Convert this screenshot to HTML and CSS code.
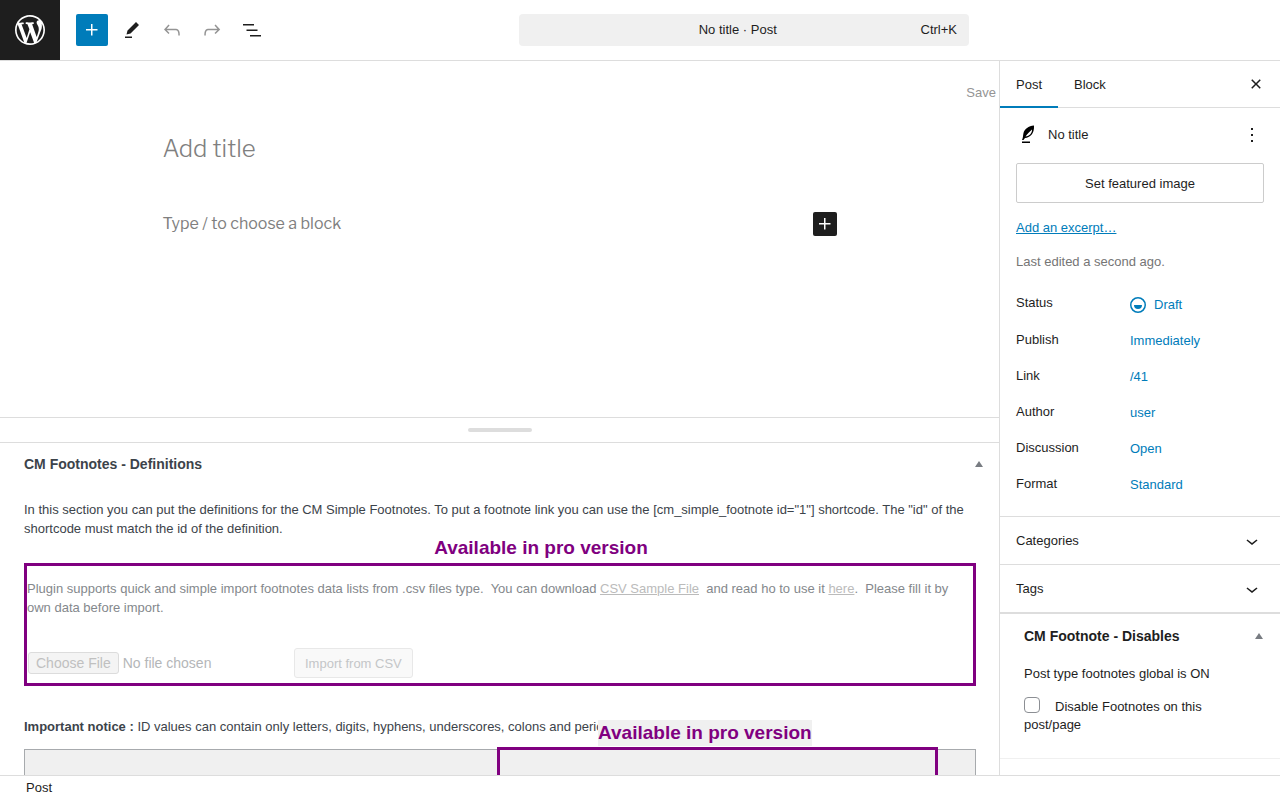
FILE: index.html
```html
<!DOCTYPE html>
<html lang="en">
  <head>
    <meta charset="UTF-8">
    <meta name="viewport" content="width=device-width, initial-scale=1.0">
    <title>Add New Post</title>
    <link rel="stylesheet" href="styles.css">
  </head>
  <body>
    <header class="header">
      <a href="#" class="logo" aria-label="View Posts">
        <svg width="36" height="36" viewBox="-2 -2 24 24"><path d="M20 10c0-5.51-4.49-10-10-10C4.48 0 0 4.49 0 10c0 5.52 4.48 10 10 10 5.51 0 10-4.48 10-10zM7.78 15.37L4.37 6.22c.55-.02 1.17-.08 1.17-.08.5-.06.44-1.13-.06-1.11 0 0-1.45.11-2.37.11-.18 0-.37 0-.58-.01C4.12 2.69 6.87 1.11 10 1.11c2.33 0 4.45.87 6.05 2.34-.68-.11-1.65.39-1.65 1.58 0 .74.45 1.36.9 2.1.35.61.55 1.36.55 2.46 0 1.49-1.4 5-1.4 5l-3.03-8.37c.54-.02.82-.17.82-.17.5-.05.44-1.25-.06-1.22 0 0-1.44.12-2.38.12-.87 0-2.33-.12-2.33-.12-.5-.03-.56 1.2-.06 1.22l.92.08 1.26 3.41zM17.41 10c.24-.64.74-1.87.43-4.25.7 1.29 1.05 2.71 1.05 4.25 0 3.29-1.73 6.24-4.4 7.78.97-2.59 1.94-5.2 2.92-7.78zM6.1 18.09C3.12 16.65 1.11 13.53 1.11 10c0-1.3.23-2.48.72-3.59C3.25 10.3 4.67 14.2 6.1 18.09zm4.03-6.63l2.58 6.98c-.86.29-1.76.45-2.71.45-.79 0-1.57-.11-2.29-.33.81-2.38 1.62-4.74 2.42-7.1z"/></svg>
      </a>
      <div class="tools">
        <button class="tool tool-primary" aria-label="Block Inserter">
          <svg width="24" height="24" viewBox="0 0 24 24"><path d="M11 12.5V17.5H12.5V12.5H17.5V11H12.5V6H11V11H6V12.5H11Z"/></svg>
        </button>
        <button class="tool" aria-label="Tools">
          <svg width="24" height="24" viewBox="0 0 24 24"><path d="m19 7-3-3-8.500 8.500-1 4 4-1L19 7Zm-7 11.500H5V20h7v-1.500Z"/></svg>
        </button>
        <button class="tool" aria-label="Undo" disabled>
          <svg width="24" height="24" viewBox="0 0 24 24"><path d="M18.3 11.7c-.6-.6-1.4-.9-2.3-.9H6.7l2.9-3.3-1.1-1-4.5 5L8.5 16l1-1-2.7-2.7H16c.5 0 .9.2 1.3.5 1 1 1 3.4 1 4.5v.3h1.5v-.2c0-1.5 0-4.3-1.5-5.7z"/></svg>
        </button>
        <button class="tool" aria-label="Redo" disabled>
          <svg width="24" height="24" viewBox="0 0 24 24"><path d="M15.6 6.5l-1.1 1 2.9 3.3H8c-.9 0-1.7.3-2.3.9-1.4 1.5-1.4 4.2-1.4 5.6v.2h1.5v-.3c0-1.1 0-3.5 1-4.5.3-.3.7-.5 1.3-.5h9.2L14.5 15l1.1 1.1 4.6-4.6-4.6-5z"/></svg>
        </button>
        <button class="tool" aria-label="Document Overview">
          <svg width="24" height="24" viewBox="0 0 24 24"><path d="M3 6h11v1.5H3V6Zm3.5 5.5h11V13h-11v-1.5ZM21 17H10v1.5h11V17Z"/></svg>
        </button>
      </div>
      <div class="header-center">
        <button class="document-bar">
          <span class="document-title">No title · Post</span>
          <span class="shortcut">Ctrl+K</span>
        </button>
      </div>
    </header>

    <div class="main">
      <main class="content">
        <div class="canvas">
          <div class="save-row"><button class="save-draft">Save</button></div>
          <div class="post">
            <h1 class="post-title">Add title</h1>
            <div class="post-block">
              <p>Type / to choose a block</p>
              <button class="inserter" aria-label="Add block">
                <svg width="24" height="24" viewBox="0 0 24 24"><path d="M11 12.5V17.5H12.5V12.5H17.5V11H12.5V6H11V11H6V12.5H11Z"/></svg>
              </button>
            </div>
          </div>
        </div>

        <div class="resizer"><span class="resizer-handle"></span></div>

        <section class="metabox">
          <div class="metabox-header">
            <h2>CM Footnotes - Definitions</h2>
            <button class="toggle" aria-label="Toggle panel: CM Footnotes - Definitions"></button>
          </div>
          <p class="intro">In this section you can put the definitions for the CM Simple Footnotes. To put a footnote link you can use the [cm_simple_footnote id="1"] shortcode. The "id" of the shortcode must match the id of the definition.</p>
          <div class="pro-title">Available in pro version</div>
          <div class="pro-box">
            <p>Plugin supports quick and simple import footnotes data lists from .csv files type.&nbsp; You can download <a href="#">CSV Sample File</a>&nbsp; and read ho to use it <a href="#">here</a>.&nbsp; Please fill it by own data before import.</p>
            <div class="import-row">
              <input type="file" class="file-input" aria-label="CSV file" disabled>
              <button class="import-btn" disabled>Import from CSV</button>
            </div>
          </div>
          <p class="notice"><strong>Important notice :</strong> ID values can contain only letters, digits, hyphens, underscores, colons and periods.</p>
          <div class="definitions">
            <div class="pro-overlay"><span>Available in pro version</span></div>
          </div>
        </section>
      </main>

      <aside class="sidebar">
        <div class="tabs">
          <button class="tab active">Post</button>
          <button class="tab">Block</button>
          <button class="close" aria-label="Close Settings">
            <svg width="24" height="24" viewBox="0 0 24 24"><path d="M12 13.06l3.712 3.713 1.061-1.06L13.061 12l3.712-3.712-1.06-1.06L12 10.938 8.288 7.227l-1.061 1.06L10.939 12l-3.712 3.712 1.06 1.061L12 13.061z"/></svg>
          </button>
        </div>

        <div class="summary">
          <div class="card">
            <svg class="quill" width="24" height="24" viewBox="0 0 24 24"><path fill-rule="evenodd" d="M18 2.500C12.500 3 8.500 6 7.500 10C7 12.500 7 15 6 17H7.500L9 15C14 14.500 18.500 11 18 2.500ZM9.500 13.500C11 11 13.500 9 16 6.500C16.300 10 13.500 13 9.500 13.500ZM6 18.500h8V20H6Z"/></svg>
            <span class="card-title">No title</span>
            <button class="more" aria-label="Actions">
              <svg width="24" height="24" viewBox="0 0 24 24"><path d="M13 19h-2v-2h2v2zm0-6h-2v-2h2v2zm0-6h-2V5h2v2z"/></svg>
            </button>
          </div>
          <button class="featured">Set featured image</button>
          <a href="#" class="excerpt">Add an excerpt…</a>
          <p class="edited">Last edited a second ago.</p>
          <dl class="rows">
            <div class="row">
              <dt>Status</dt>
              <dd>
                <button class="status"><svg width="24" height="24" viewBox="0 0 24 24"><path fill-rule="evenodd" d="M12 18.5a6.5 6.5 0 1 1 0-13 6.5 6.5 0 0 1 0 13ZM4 12a8 8 0 1 1 16 0 8 8 0 0 1-16 0Zm8 4a4 4 0 0 0 4-4H8a4 4 0 0 0 4 4Z"/></svg>Draft</button>
              </dd>
            </div>
            <div class="row"><dt>Publish</dt><dd><button>Immediately</button></dd></div>
            <div class="row"><dt>Link</dt><dd><button>/41</button></dd></div>
            <div class="row"><dt>Author</dt><dd><button>user</button></dd></div>
            <div class="row"><dt>Discussion</dt><dd><button>Open</button></dd></div>
            <div class="row"><dt>Format</dt><dd><button>Standard</button></dd></div>
          </dl>
        </div>

        <button class="panel">
          Categories
          <svg width="24" height="24" viewBox="0 0 24 24"><path d="M17.5 11.6L12 16l-5.5-4.4.9-1.2L12 14l4.500-3.600 1 1.200z"/></svg>
        </button>
        <button class="panel">
          Tags
          <svg width="24" height="24" viewBox="0 0 24 24"><path d="M17.5 11.6L12 16l-5.5-4.4.9-1.2L12 14l4.500-3.600 1 1.200z"/></svg>
        </button>

        <section class="disables">
          <div class="metabox-header">
            <h2>CM Footnote - Disables</h2>
            <button class="toggle" aria-label="Toggle panel: CM Footnote - Disables"></button>
          </div>
          <p>Post type footnotes global is ON</p>
          <label><input type="checkbox" class="checkbox">Disable Footnotes on this post/page</label>
        </section>
      </aside>
    </div>

    <footer class="footer">Post</footer>
  </body>
</html>
```

FILE: styles.css
```css
* {
  box-sizing: border-box;
  margin: 0;
  padding: 0;
}

body {
  display: flex;
  flex-direction: column;
  height: 100vh;
  overflow: hidden;
  font-family: "Liberation Sans", Arial, sans-serif;
  font-size: 13px;
  line-height: 18px;
  color: #1e1e1e;
  background: #fff;
}

button {
  border: none;
  background: none;
  font: inherit;
  color: inherit;
  cursor: pointer;
}

svg {
  display: block;
  flex-shrink: 0;
  fill: currentColor;
}

/* Header */
.header {
  display: flex;
  flex-shrink: 0;
  height: 61px;
  padding-right: 60px;
  border-bottom: 1px solid #ddd;
}

.logo {
  display: flex;
  align-items: center;
  justify-content: center;
  width: 60px;
  height: 60px;
  background: #1e1e1e;
  color: #fff;
}

.tools {
  display: flex;
  align-items: center;
  gap: 8px;
  padding-left: 16px;
}

.tool {
  display: flex;
  align-items: center;
  justify-content: center;
  width: 32px;
  height: 32px;
  border-radius: 2px;
}

.tool:disabled {
  color: #949494;
}

.tool-primary {
  background: #007cba;
  color: #fff;
}

.header-center {
  display: flex;
  flex: 1;
  align-items: center;
  justify-content: center;
}

.document-bar {
  display: flex;
  align-items: center;
  width: 450px;
  height: 32px;
  padding: 0 12px;
  border-radius: 4px;
  background: #f0f0f0;
}

.document-title {
  flex: 1;
  padding-left: 24px;
  text-align: center;
}

/* Main area */
.main {
  display: flex;
  flex: 1;
  min-height: 0;
}

.content {
  display: flex;
  flex: 1;
  flex-direction: column;
  min-width: 0;
}

.canvas {
  height: 356px;
  flex-shrink: 0;
  padding-top: 23px;
}

.save-row {
  display: flex;
  justify-content: flex-end;
  padding-right: 3px;
}

.save-draft {
  color: #949494;
}

.post {
  max-width: 674px;
  margin: 31px auto 0;
  font-family: "Libre Franklin", Inter, sans-serif;
  color: #808080;
}

.post-title {
  font-size: 24px;
  font-weight: 300;
  line-height: 32px;
}

.post-block {
  display: flex;
  align-items: center;
  justify-content: space-between;
  margin-top: 46px;
  font-size: 16px;
  line-height: 26px;
}

.inserter {
  border-radius: 2px;
  background: #1e1e1e;
  color: #fff;
}

.resizer {
  display: flex;
  flex-shrink: 0;
  align-items: center;
  justify-content: center;
  height: 26px;
  border-top: 1px solid #ddd;
  border-bottom: 1px solid #ddd;
}

.resizer-handle {
  width: 64px;
  height: 4px;
  border-radius: 2px;
  background: #ddd;
}

/* Meta boxes */
.metabox {
  display: flex;
  flex: 1;
  flex-direction: column;
  min-height: 0;
  padding: 0 23px 0 24px;
  overflow: hidden;
  line-height: 19px;
  color: #3c434a;
}

.metabox > * {
  flex-shrink: 0;
}

.metabox-header {
  display: flex;
  align-items: center;
  justify-content: space-between;
  height: 42px;
}

.metabox-header h2 {
  font-size: 14px;
  line-height: 20px;
}

.toggle {
  margin-right: -7px;
  border: 4px solid transparent;
  border-top: none;
  border-bottom: 6px solid #787c82;
}

.intro {
  margin-top: 15px;
}

.pro-title {
  padding: 0 0 6px 82px;
  font-size: 19px;
  font-weight: bold;
  line-height: 19px;
  text-align: center;
  color: purple;
}

.pro-box {
  border: 3px solid purple;
  color: #84888c;
}

.pro-box p {
  margin-top: 13px;
}

.pro-box a {
  color: #bbb;
}

.import-row {
  display: flex;
  align-items: center;
  gap: 12px;
  margin: 31px 0 5px;
  padding-left: 1px;
}

.file-input {
  width: 254px;
  font-family: inherit;
  font-size: 14px;
  color: #b4b6b8;
}

.file-input::file-selector-button {
  height: 22px;
  padding: 0 7px;
  border: 1px solid #dcdcdc;
  border-radius: 3px;
  background: #f4f4f4;
  font: inherit;
  color: #c0c0c0;
}

.import-btn {
  height: 30px;
  padding: 0 10px;
  border: 1px solid #e8e8e8;
  border-radius: 3px;
  background: #f9f9f9;
  color: #c4c6c8;
}

.notice {
  margin-top: 31px;
}

.definitions {
  position: relative;
  height: 120px;
  margin-top: 13px;
  border: 1px solid #a7aaad;
  background: #f0f0f0;
}

/* sits over the right half of the definitions table */
.pro-overlay {
  position: absolute;
  top: -3px;
  right: 37px;
  bottom: 0;
  width: 441px;
  border: 3px solid purple;
}

.pro-overlay span {
  position: absolute;
  bottom: 100%;
  left: 98px;
  margin-bottom: 4px;
  background: #f0f0f0;
  font-size: 19px;
  font-weight: bold;
  line-height: 26px;
  white-space: nowrap;
  color: purple;
}

/* Sidebar */
.sidebar {
  width: 281px;
  flex-shrink: 0;
  overflow: hidden;
  border-left: 1px solid #ddd;
}

.tabs {
  display: flex;
  height: 47px;
  border-bottom: 1px solid #ddd;
}

.tab {
  height: 47px;
  padding: 0 16px;
}

.tab.active {
  border-bottom: 2px solid #007cba;
  padding-top: 2px;
}

.close {
  margin-left: auto;
  padding-right: 12px;
}

.summary {
  padding: 14px 16px 16px;
}

.card {
  display: flex;
  align-items: center;
  gap: 8px;
  height: 25px;
}

.quill {
  color: #000;
}

.card-title {
  flex: 1;
}

.featured {
  display: block;
  width: 100%;
  height: 40px;
  margin-top: 16px;
  padding-top: 1px;
  border: 1px solid #ccc;
  border-radius: 2px;
}

.excerpt {
  display: block;
  margin-top: 16px;
  color: #007cba;
}

.edited {
  margin-top: 16px;
  color: #757575;
}

.rows {
  display: flex;
  flex-direction: column;
  gap: 4px;
  margin-top: 16px;
}

.row {
  display: flex;
  min-height: 32px;
}

.row:first-child {
  min-height: 33px;
}

.row dt {
  width: 114px;
  padding-top: 7px;
}

.row dd {
  display: flex;
  align-items: center;
  padding-top: 2px;
  color: #007cba;
}

.status {
  display: flex;
  align-items: center;
  gap: 4px;
  margin-left: -4px;
}

.panel {
  display: flex;
  align-items: center;
  justify-content: space-between;
  width: 100%;
  height: 48px;
  padding: 0 16px;
  border-top: 1px solid #ddd;
}

.disables {
  padding: 1px 24px 24px;
  border-top: 2px solid #ddd;
  border-bottom: 1px solid #f0f0f0;
}

.disables p {
  margin: 8px 0 14px;
}

.checkbox {
  width: 16px;
  height: 16px;
  margin-right: 15px;
  border: 1px solid #8c8f94;
  border-radius: 4px;
  background: #fff;
  appearance: none;
  vertical-align: -2px;
}

.footer {
  flex-shrink: 0;
  height: 25px;
  padding: 3px 26px;
  border-top: 1px solid #ddd;
}
```
